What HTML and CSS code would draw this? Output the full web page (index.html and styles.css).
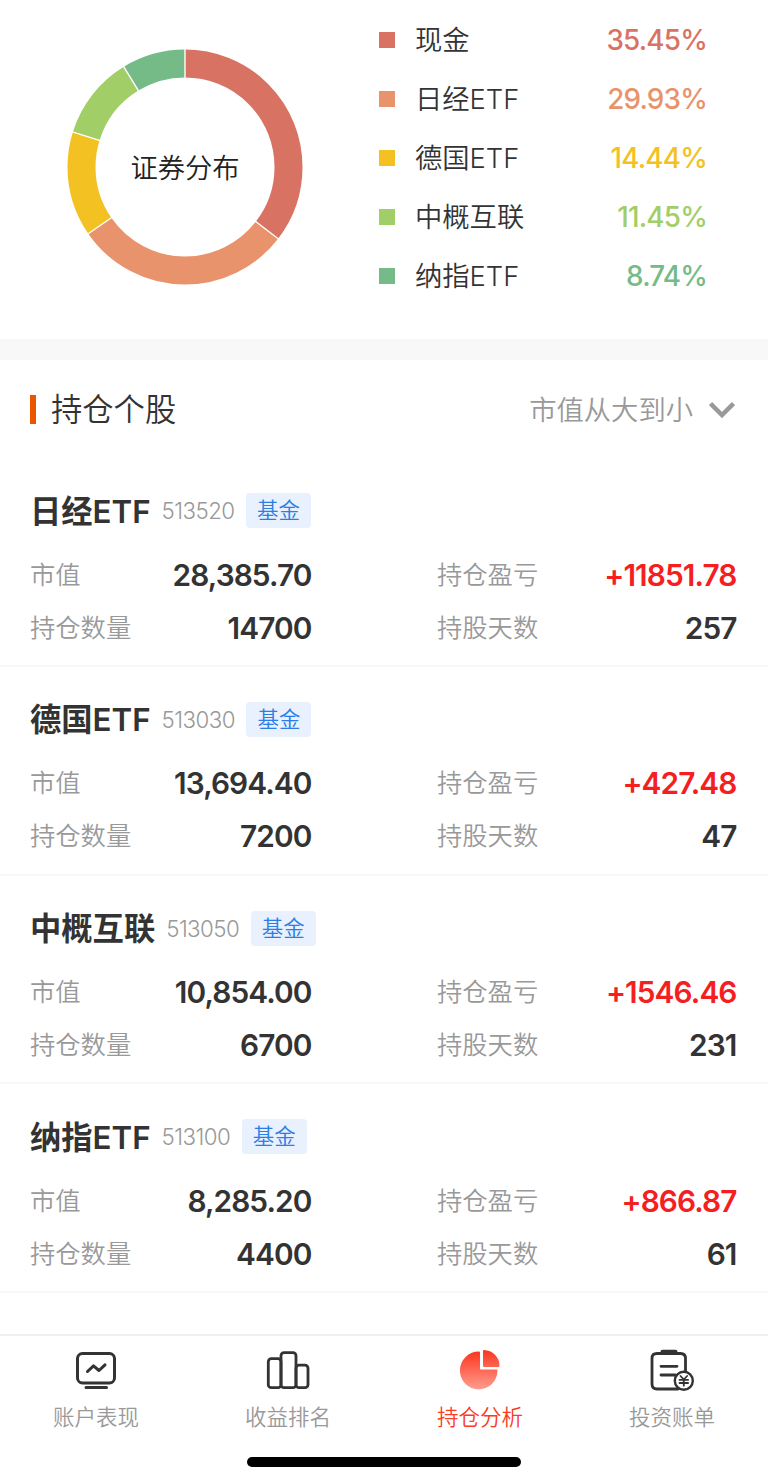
FILE: index.html
```html
<!DOCTYPE html>
<html lang="zh-CN">
<head>
  <meta charset="UTF-8">
  <meta name="viewport" content="width=device-width, initial-scale=1.0">
  <title>持仓分析</title>
  <link rel="stylesheet" href="styles.css">
</head>
<body>

  <section class="overview">
    <div class="chart">
      <svg class="donut" viewBox="0 0 236 236">
        <g fill="none" stroke-width="28" transform="rotate(-90 118 118)">
          <circle cx="118" cy="118" r="103.5" pathLength="100" stroke="#d87364" stroke-dasharray="35.45 100"/>
          <circle cx="118" cy="118" r="103.5" pathLength="100" stroke="#e8936b" stroke-dasharray="29.93 100" stroke-dashoffset="-35.45"/>
          <circle cx="118" cy="118" r="103.5" pathLength="100" stroke="#f3c122" stroke-dasharray="14.44 100" stroke-dashoffset="-65.38"/>
          <circle cx="118" cy="118" r="103.5" pathLength="100" stroke="#a2ce67" stroke-dasharray="11.45 100" stroke-dashoffset="-79.82"/>
          <circle cx="118" cy="118" r="103.5" pathLength="100" stroke="#75bb88" stroke-dasharray="8.73 100" stroke-dashoffset="-91.27"/>
        </g>
        <!-- gaps between slices -->
        <g stroke="#fff" stroke-width="1.4">
          <line x1="118" y1="0" x2="118" y2="30"/>
          <line x1="118" y1="0" x2="118" y2="30" transform="rotate(127.6 118 118)"/>
          <line x1="118" y1="0" x2="118" y2="30" transform="rotate(235.4 118 118)"/>
          <line x1="118" y1="0" x2="118" y2="30" transform="rotate(287.3 118 118)"/>
          <line x1="118" y1="0" x2="118" y2="30" transform="rotate(328.6 118 118)"/>
        </g>
      </svg>
      <span class="chart-title">证券分布</span>
    </div>
    <ul class="legend">
      <li class="red"><i></i><span>现金</span><b>35.45%</b></li>
      <li class="orange"><i></i><span>日经ETF</span><b>29.93%</b></li>
      <li class="yellow"><i></i><span>德国ETF</span><b>14.44%</b></li>
      <li class="lime"><i></i><span>中概互联</span><b>11.45%</b></li>
      <li class="green"><i></i><span>纳指ETF</span><b>8.74%</b></li>
    </ul>
  </section>

  <section class="holdings">
    <div class="holdings-header">
      <h2><span>持仓个股</span></h2>
      <div class="sort">
        <span>市值从大到小</span>
        <svg width="26" height="18" viewBox="0 0 26 18"><path d="M1.5 3.5L13 15L24.5 3.5" fill="none" stroke="#999" stroke-width="4.5"/></svg>
      </div>
    </div>

    <div class="card">
      <div class="card-title"><h3>日经ETF</h3><span class="code">513520</span><span class="tag">基金</span></div>
      <div class="card-grid">
        <label>市值</label><b>28,385.70</b>
        <label>持仓盈亏</label><b class="up">+11851.78</b>
        <label>持仓数量</label><b>14700</b>
        <label>持股天数</label><b>257</b>
      </div>
    </div>

    <div class="card">
      <div class="card-title"><h3>德国ETF</h3><span class="code">513030</span><span class="tag">基金</span></div>
      <div class="card-grid">
        <label>市值</label><b>13,694.40</b>
        <label>持仓盈亏</label><b class="up">+427.48</b>
        <label>持仓数量</label><b>7200</b>
        <label>持股天数</label><b>47</b>
      </div>
    </div>

    <div class="card">
      <div class="card-title"><h3>中概互联</h3><span class="code">513050</span><span class="tag">基金</span></div>
      <div class="card-grid">
        <label>市值</label><b>10,854.00</b>
        <label>持仓盈亏</label><b class="up">+1546.46</b>
        <label>持仓数量</label><b>6700</b>
        <label>持股天数</label><b>231</b>
      </div>
    </div>

    <div class="card">
      <div class="card-title"><h3>纳指ETF</h3><span class="code">513100</span><span class="tag">基金</span></div>
      <div class="card-grid">
        <label>市值</label><b>8,285.20</b>
        <label>持仓盈亏</label><b class="up">+866.87</b>
        <label>持仓数量</label><b>4400</b>
        <label>持股天数</label><b>61</b>
      </div>
    </div>
  </section>

  <nav class="tabbar">
    <div class="tabs">
      <a class="tab">
        <svg width="48" height="48" viewBox="0 0 48 48" fill="none" stroke="#333" stroke-width="3" stroke-linecap="round" stroke-linejoin="round">
          <rect x="5.5" y="7.5" width="37" height="29.5" rx="5"/>
          <path d="M15.5 25.5L21.5 19.8L27 24.5L33 18.8M14 41.5H34.5"/>
        </svg>
        <span>账户表现</span>
      </a>
      <a class="tab">
        <svg width="48" height="48" viewBox="0 0 48 48" fill="none" stroke="#333" stroke-width="2.8">
          <rect x="4.3" y="12.7" width="12.7" height="29" rx="3"/>
          <rect x="17" y="6.7" width="15" height="35" rx="3"/>
          <rect x="32" y="19.2" width="12" height="22.5" rx="3"/>
        </svg>
        <span>收益排名</span>
      </a>
      <a class="tab active">
        <svg width="48" height="48" viewBox="0 0 48 48">
          <defs>
            <linearGradient id="pie" x1="0" y1="5" x2="0" y2="43" gradientUnits="userSpaceOnUse">
              <stop offset="0" stop-color="#fb351c"/>
              <stop offset="1" stop-color="#ff9c8e"/>
            </linearGradient>
            <linearGradient id="slice" x1="0" y1="4" x2="0" y2="21" gradientUnits="userSpaceOnUse">
              <stop offset="0" stop-color="#fb351c"/>
              <stop offset="1" stop-color="#fd6753"/>
            </linearGradient>
          </defs>
          <path d="M23 5.5Q24 5.5 24 6.5V22.5Q24 23.5 25 23.5H40.5Q41.5 23.5 41.5 24.5A18.8 19 0 1 1 23 5.5Z" fill="url(#pie)"/>
          <path d="M27 5Q27 4 28 4A16 16 0 0 1 43.5 20Q43.5 21 42.5 21H28Q27 21 27 20Z" fill="url(#slice)"/>
        </svg>
        <span>持仓分析</span>
      </a>
      <a class="tab">
        <svg width="48" height="48" viewBox="0 0 48 48" fill="none" stroke="#333" stroke-width="2.8" stroke-linecap="round">
          <path d="M37.5 25V12.5Q37.5 7.5 32.5 7.5H9Q4 7.5 4 12.5V38Q4 43 9 43H30"/>
          <path d="M14.5 5.7H27.5" stroke-width="4"/>
          <path d="M13 20.3H29M13 29H27"/>
          <circle cx="35.8" cy="34.7" r="9" fill="#fff" stroke-width="2.4"/>
          <path d="M32.5 30L35.8 33.5L39.1 30M35.8 33.5V39.7M31.5 33.9H40.1M31.5 37H40.1" stroke-width="1.8"/>
        </svg>
        <span>投资账单</span>
      </a>
    </div>
    <div class="home-indicator"></div>
  </nav>

</body>
</html>
```
FILE: styles.css
```css
* {
  box-sizing: border-box;
}

body {
  margin: 0;
  width: 768px;
  height: 1483px;
  overflow: hidden;
  display: flex;
  flex-direction: column;
  font-family: Inter, "Noto Sans CJK SC", sans-serif;
  font-weight: 350;
  color: #333;
  background-color: #fff;
  white-space: nowrap;
}

h2,
h3,
ul {
  margin: 0;
  padding: 0;
}

.overview {
  display: flex;
  height: 360px;
  border-bottom: 21px solid #f8f8f8;
}

.chart {
  display: grid;
  place-items: center;
  width: 236px;
  height: 236px;
  margin: 49px 76px 0 67px;
}

.donut,
.chart-title {
  grid-area: 1 / 1;
}

.donut {
  width: 236px;
  height: 236px;
}

.chart-title {
  padding-bottom: 3px;
  font-size: 27.3px;
  color: #222;
}

.legend {
  width: 328px;
  padding-top: 10.5px;
  list-style: none;
}

.legend li {
  display: flex;
  align-items: center;
  height: 59.1px;
  font-size: 27.3px;
}

.legend i {
  width: 16px;
  height: 16px;
  margin-right: 20px;
  background-color: currentColor;
}

.legend span {
  padding-bottom: 4px;
  color: #333;
}

.legend b {
  margin-left: auto;
  font-size: 27.8px;
  font-weight: 550;
  letter-spacing: -0.8px;
}

.red {
  color: #d87364;
}

.orange {
  color: #e8936b;
}

.yellow {
  color: #f3c122;
}

.lime {
  color: #a2ce67;
}

.green {
  color: #75bb88;
}

.holdings {
  height: 974px;
}

.holdings-header {
  display: flex;
  align-items: center;
  justify-content: space-between;
  height: 98px;
  padding: 0 33px 0 30px;
}

.holdings-header h2 {
  display: flex;
  align-items: center;
  gap: 15px;
  font-size: 31.3px;
  font-weight: 350;
}

.holdings-header h2::before {
  content: "";
  width: 6px;
  height: 29px;
  background-color: #eb5500;
}

.holdings-header span {
  padding-bottom: 3px;
}

.sort {
  display: flex;
  align-items: center;
  gap: 16px;
  font-size: 27.3px;
  color: #999;
}

.card {
  height: 208.75px;
  padding: 35px 31px 0 30px;
  border-bottom: 2px solid #f7f7f7;
}

.card-title {
  display: flex;
  align-items: center;
  height: 35px;
}

.card-title h3 {
  padding-bottom: 3px;
  font-size: 31.3px;
  font-weight: 600;
}

.code {
  margin: 0 11.5px 0 11px;
  font-size: 22.3px;
  letter-spacing: -0.55px;
  color: #999;
}

.tag {
  height: 35px;
  padding: 0 11px;
  border-radius: 4px;
  font-size: 21.5px;
  line-height: 35px;
  color: #2b7ee8;
  background-color: #e8f1fd;
}

.card-grid {
  display: grid;
  grid-template-columns: 120px 161.5px 245.5px 179.5px;
  grid-template-rows: 53px 53px;
  align-items: center;
  padding-top: 20px;
}

.card-grid label {
  padding-bottom: 4px;
  font-size: 25.3px;
  color: #999;
}

.card-grid label:nth-of-type(even) {
  padding-left: 125.5px;
}

.card-grid b {
  font-size: 29.8px;
  font-weight: 600;
  letter-spacing: -0.9px;
  text-align: right;
}

.card-grid .up {
  color: #f4201f;
}

.tabbar {
  height: 149px;
  border-top: 2px solid #efefef;
}

.tabs {
  display: flex;
}

.tab {
  display: flex;
  flex: 1;
  flex-direction: column;
  align-items: center;
  height: 121px;
  padding-top: 10px;
  font-size: 21.5px;
  line-height: 32px;
  color: #999;
}

.tab span {
  margin-top: 7px;
}

.tab.active {
  color: #fa3c24;
}

.home-indicator {
  width: 274px;
  height: 10px;
  margin: 0 auto;
  border-radius: 5px;
  background-color: #000;
}
```
